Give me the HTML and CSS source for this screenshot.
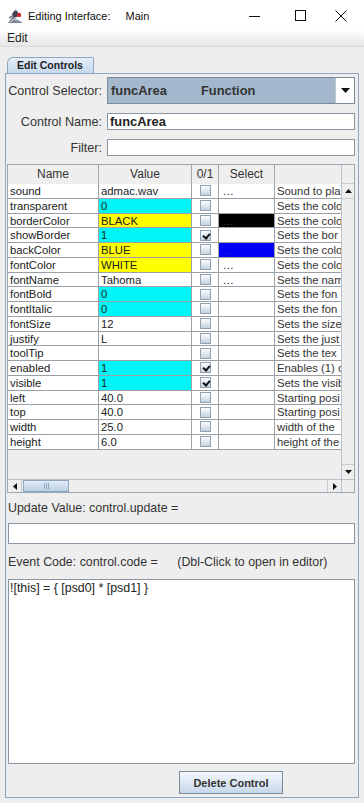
FILE: index.html
```html
<!DOCTYPE html>
<html lang="en">
<head>
    <meta charset="UTF-8">
    <title>Editing Interface: Main</title>
    <link rel="stylesheet" href="styles.css">
</head>
<body>
<div class="window">
    <div class="titlebar">
        <svg class="app-icon" width="16" height="15" viewBox="0 0 16 15">
            <path d="M0 14 L4 8 L9 10 L15 14 Z" fill="#7d8799"/>
            <path d="M2 13 L6 10 L10 11 L14 13" stroke="#d6dae2" stroke-width="1" fill="none"/>
            <path d="M4 5 L7 1 L10 3 L9 8 L5 9 Z" fill="#3e4452"/>
            <path d="M6 2 L8 0 L9 2 Z" fill="#9aa2b0"/>
            <circle cx="11" cy="6" r="2.2" fill="#c8262b"/>
            <path d="M1 9 L4 7" stroke="#5a6272" stroke-width="1.2"/>
        </svg>
        <span class="title">Editing Interface:</span>
        <span class="title title-doc">Main</span>
        <div class="win-buttons">
            <div class="win-btn btn-min">
                <svg width="12" height="12" viewBox="0 0 12 12"><path d="M0 6.5 H11" stroke="#111" stroke-width="1"/></svg>
            </div>
            <div class="win-btn btn-max">
                <svg width="12" height="12" viewBox="0 0 12 12"><rect x="0.5" y="0.5" width="10" height="10" fill="none" stroke="#111" stroke-width="1"/></svg>
            </div>
            <div class="win-btn btn-close">
                <svg width="12" height="12" viewBox="0 0 12 12"><path d="M0.5 0.5 L11.5 11.5 M11.5 0.5 L0.5 11.5" stroke="#111" stroke-width="1"/></svg>
            </div>
        </div>
    </div>
    <div class="menubar"><span>Edit</span></div>

    <div class="content">
        <div class="tab">Edit Controls</div>
        <div class="panel">
            <div class="form-row selector-row">
                <label>Control Selector:</label>
                <div class="combo">
                    <span class="combo-name">funcArea</span>
                    <span class="combo-type">Function</span>
                    <div class="combo-arrow">
                        <svg width="9" height="5" viewBox="0 0 9 5"><path d="M0 0 H9 L4.5 5 Z" fill="#111"/></svg>
                    </div>
                </div>
            </div>
            <div class="form-row">
                <label>Control Name:</label>
                <div class="field bold">funcArea</div>
            </div>
            <div class="form-row">
                <label>Filter:</label>
                <div class="field"></div>
            </div>

            <div class="table-pane">
                <div class="thead">
                    <div class="th">Name</div>
                    <div class="th">Value</div>
                    <div class="th">0/1</div>
                    <div class="th">Select</div>
                    <div class="th"></div>
                </div>
                <div class="vcorner"></div>
                <div class="viewport">
                    <div class="tr"><div class="td">sound</div><div class="td">admac.wav</div><div class="td cbcell"><span class="cb"></span></div><div class="td sel">...</div><div class="td desc">Sound to pla</div></div>
                    <div class="tr"><div class="td">transparent</div><div class="td cyan">0</div><div class="td cbcell"><span class="cb"></span></div><div class="td sel"></div><div class="td desc">Sets the colo</div></div>
                    <div class="tr"><div class="td">borderColor</div><div class="td yellow">BLACK</div><div class="td cbcell"><span class="cb"></span></div><div class="td sel sel-black">...</div><div class="td desc">Sets the colo</div></div>
                    <div class="tr"><div class="td">showBorder</div><div class="td cyan">1</div><div class="td cbcell"><span class="cb checked"></span></div><div class="td sel"></div><div class="td desc">Sets the bor</div></div>
                    <div class="tr"><div class="td">backColor</div><div class="td yellow">BLUE</div><div class="td cbcell"><span class="cb"></span></div><div class="td sel sel-blue">...</div><div class="td desc">Sets the colo</div></div>
                    <div class="tr"><div class="td">fontColor</div><div class="td yellow">WHITE</div><div class="td cbcell"><span class="cb"></span></div><div class="td sel">...</div><div class="td desc">Sets the colo</div></div>
                    <div class="tr"><div class="td">fontName</div><div class="td">Tahoma</div><div class="td cbcell"><span class="cb"></span></div><div class="td sel">...</div><div class="td desc">Sets the nam</div></div>
                    <div class="tr"><div class="td">fontBold</div><div class="td cyan">0</div><div class="td cbcell"><span class="cb"></span></div><div class="td sel"></div><div class="td desc">Sets the fon</div></div>
                    <div class="tr"><div class="td">fontItalic</div><div class="td cyan">0</div><div class="td cbcell"><span class="cb"></span></div><div class="td sel"></div><div class="td desc">Sets the fon</div></div>
                    <div class="tr"><div class="td">fontSize</div><div class="td">12</div><div class="td cbcell"><span class="cb"></span></div><div class="td sel"></div><div class="td desc">Sets the size</div></div>
                    <div class="tr"><div class="td">justify</div><div class="td">L</div><div class="td cbcell"><span class="cb"></span></div><div class="td sel"></div><div class="td desc">Sets the just</div></div>
                    <div class="tr"><div class="td">toolTip</div><div class="td"></div><div class="td cbcell"><span class="cb"></span></div><div class="td sel"></div><div class="td desc">Sets the tex</div></div>
                    <div class="tr"><div class="td">enabled</div><div class="td cyan">1</div><div class="td cbcell"><span class="cb checked"></span></div><div class="td sel"></div><div class="td desc">Enables (1) o</div></div>
                    <div class="tr"><div class="td">visible</div><div class="td cyan">1</div><div class="td cbcell"><span class="cb checked"></span></div><div class="td sel"></div><div class="td desc">Sets the visib</div></div>
                    <div class="tr"><div class="td">left</div><div class="td">40.0</div><div class="td cbcell"><span class="cb"></span></div><div class="td sel"></div><div class="td desc">Starting posi</div></div>
                    <div class="tr"><div class="td">top</div><div class="td">40.0</div><div class="td cbcell"><span class="cb"></span></div><div class="td sel"></div><div class="td desc">Starting posi</div></div>
                    <div class="tr"><div class="td">width</div><div class="td">25.0</div><div class="td cbcell"><span class="cb"></span></div><div class="td sel"></div><div class="td desc">width of the</div></div>
                    <div class="tr"><div class="td">height</div><div class="td">6.0</div><div class="td cbcell"><span class="cb"></span></div><div class="td sel"></div><div class="td desc">height of the</div></div>
                </div>
                <div class="vscroll">
                    <div class="sbtn">
                        <svg width="7" height="4" viewBox="0 0 7 4"><path d="M0 4 H7 L3.5 0 Z" fill="#111"/></svg>
                    </div>
                    <div class="sbtn">
                        <svg width="7" height="4" viewBox="0 0 7 4"><path d="M0 0 H7 L3.5 4 Z" fill="#111"/></svg>
                    </div>
                </div>
                <div class="hscroll">
                    <div class="sbtn hbtn">
                        <svg width="4" height="7" viewBox="0 0 4 7"><path d="M4 0 V7 L0 3.5 Z" fill="#111"/></svg>
                    </div>
                    <div class="thumb"><span class="grip"></span></div>
                    <div class="sbtn hbtn right">
                        <svg width="4" height="7" viewBox="0 0 4 7"><path d="M0 0 V7 L4 3.5 Z" fill="#111"/></svg>
                    </div>
                </div>
                <div class="hcorner"></div>
            </div>

            <div class="caption update-caption">Update Value: control.update =</div>
            <div class="field wide-field"></div>
            <div class="caption event-caption">Event Code: control.code = <span class="hint">(Dbl-Click to open in editor)</span></div>
            <div class="code-area">![this] = { [psd0] * [psd1] }</div>
            <div class="button-row">
                <button class="delete-btn">Delete Control</button>
            </div>
        </div>
    </div>
</div>
</body>
</html>
```

FILE: styles.css
```css
* {
    box-sizing: border-box;
}
body {
    margin: 0;
    background: #eeeeee;
    font-family: "Liberation Sans", Arial, sans-serif;
    color: #333;
}
.window {
    width: 364px;
    height: 803px;
    overflow: hidden;
    background: #eeeeee;
}
.titlebar {
    height: 31px;
    background: #fff;
    display: flex;
    align-items: center;
    padding-left: 8px;
}
.app-icon {
    margin-right: 4px;
    margin-top: 1px;
}
.title {
    font-size: 11px;
    color: #111;
}
.title-doc {
    margin-left: 15px;
}
.win-buttons {
    margin-left: auto;
    display: flex;
    height: 31px;
}
.win-btn {
    display: flex;
    align-items: center;
    justify-content: center;
}
.btn-min { width: 58px; }
.btn-max { width: 34px; }
.btn-close { width: 46px; }

.menubar {
    height: 16px;
    background: linear-gradient(#fdfdfd, #e6e6e6);
    border-bottom: 1px solid #dadada;
    font-size: 12px;
    line-height: 15px;
    padding-left: 7px;
    color: #222;
}

.content {
    padding: 10px 5px 0 5px;
}
.tab {
    width: 87px;
    height: 16px;
    margin-left: 2px;
    border: 1px solid #8ea6bf;
    border-bottom: none;
    border-top-left-radius: 6px;
    border-top-right-radius: 2px;
    background: linear-gradient(#e4eef8, #c6d9ec);
    font-size: 10.5px;
    font-weight: bold;
    line-height: 15px;
    padding-left: 9px;
    color: #222;
}
.panel {
    width: 354px;
    height: 725px;
    border: 1px solid #8ea6bf;
    padding: 3px 3px 0 2px;
    background: #eeeeee;
}

.form-row {
    display: grid;
    grid-template-columns: 94px 1fr;
    column-gap: 5px;
    align-items: center;
    height: 17px;
    margin-top: 9px;
}
.form-row label {
    text-align: right;
    font-size: 12.6px;
    color: #333;
}
.selector-row {
    height: 27px;
    margin-top: 0;
}
.form-row:last-of-type {
    margin-top: 10px;
}
.combo {
    height: 27px;
    display: flex;
    align-items: center;
    background: #a3b8cc;
    border: 1px solid #7a8a99;
    font-size: 12.9px;
    font-weight: bold;
    color: #333;
}
.combo-name {
    padding-left: 3px;
    width: 93px;
}
.combo-arrow {
    margin-left: auto;
    width: 19px;
    height: 25px;
    background: #fff;
    border-left: 1px solid #c0c8d0;
    display: flex;
    align-items: center;
    justify-content: center;
}
.field {
    height: 17px;
    background: #fff;
    border: 1px solid #8a96a3;
    font-size: 12.9px;
    line-height: 15px;
    padding-left: 2px;
    color: #222;
}
.bold {
    font-weight: bold;
}

.table-pane {
    margin-top: 8px;
    margin-left: -1px;
    width: 348px;
    height: 329px;
    border: 1px solid #9aa8b6;
    display: grid;
    grid-template-columns: 333px 13px;
    grid-template-rows: 19px 1fr 13px;
    background: #eeeeee;
}
.thead,
.tr {
    display: grid;
    grid-template-columns: 91px 93px 27px 56px 66px;
}
.thead {
    overflow: hidden;
    background: #eeeeee;
}
.th {
    border-right: 1px solid #a6a6a6;
    border-bottom: 1px solid #a6a6a6;
    font-size: 12px;
    line-height: 19px;
    text-align: center;
    color: #333;
}
.th:last-child {
    border-right: none;
}
.vcorner {
    border-left: 1px solid #b9c2cb;
    border-bottom: 1px solid #c8cdd2;
}
.viewport {
    overflow: hidden;
}
.tr {
    height: 14.75px;
}
.td {
    background: #fff;
    border-right: 1px solid #9aa0a6;
    border-bottom: 1px solid #9aa0a6;
    font-size: 11.3px;
    line-height: 14px;
    padding-left: 2px;
    white-space: nowrap;
    overflow: hidden;
    color: #222;
}
.td.desc {
    border-right: none;
    color: #333;
}
.cyan {
    background: #00f6f6;
}
.yellow {
    background: #ffff00;
}
.cbcell {
    display: flex;
    align-items: center;
    justify-content: center;
    padding-left: 0;
}
.cb {
    width: 11px;
    height: 11px;
    border: 1px solid #93a0ad;
    background: linear-gradient(#fbfdff, #c5d2df);
    position: relative;
}
.cb.checked::after {
    content: "";
    position: absolute;
    left: 2px;
    top: 2px;
    width: 5px;
    height: 3px;
    border-left: 2px solid #111;
    border-bottom: 2px solid #111;
    transform: rotate(-50deg);
}
.sel {
    padding-left: 4px;
    letter-spacing: 0.5px;
}
.sel-black {
    background: #000;
    color: #444;
}
.sel-blue {
    background: #0000f4;
    color: #2a2ac0;
}

.vscroll {
    border-left: 1px solid #b9c2cb;
    display: flex;
    flex-direction: column;
    justify-content: space-between;
    background: #eeeeee;
}
.sbtn {
    height: 15px;
    display: flex;
    align-items: center;
    justify-content: center;
    border-bottom: 1px solid #c8cdd2;
}
.vscroll .sbtn:last-child {
    border-bottom: none;
    border-top: 1px solid #c8cdd2;
}
.hscroll {
    border-top: 1px solid #b9c2cb;
    display: flex;
    align-items: stretch;
    background: #eeeeee;
}
.hbtn {
    width: 14px;
    height: auto;
    border-bottom: none;
    border-right: 1px solid #c8cdd2;
}
.hbtn.right {
    margin-left: auto;
    border-right: none;
    border-left: 1px solid #c8cdd2;
}
.thumb {
    width: 46px;
    margin-left: 1px;
    border: 1px solid #8ea6bf;
    background: linear-gradient(#e2ecf6, #bcd0e4);
    display: flex;
    align-items: center;
    justify-content: center;
}
.grip {
    width: 5px;
    height: 6px;
    border-left: 1px solid #8ea6bf;
    border-right: 1px solid #8ea6bf;
    position: relative;
}
.grip::after {
    content: "";
    position: absolute;
    left: 1px;
    top: 0;
    height: 6px;
    border-left: 1px solid #8ea6bf;
}
.hcorner {
    border-top: 1px solid #b9c2cb;
    border-left: 1px solid #b9c2cb;
}

.caption {
    font-size: 12.4px;
    line-height: 16px;
    color: #333;
}
.update-caption {
    margin-top: 7px;
}
.wide-field {
    margin-top: 7px;
    height: 21px;
}
.event-caption {
    margin-top: 10px;
}
.hint {
    margin-left: 16px;
}
.code-area {
    margin-top: 9px;
    height: 185px;
    background: #fff;
    border: 1px solid #8a96a3;
    font-size: 12.4px;
    line-height: 16px;
    padding: 0 1px;
    color: #222;
}
.button-row {
    margin-top: 7px;
    padding-left: 171px;
}
.delete-btn {
    width: 104px;
    height: 23px;
    border: 1px solid #7a8a99;
    background: linear-gradient(#f4f8fc, #c6d8ea);
    font-family: "Liberation Sans", Arial, sans-serif;
    font-size: 11px;
    font-weight: bold;
    color: #333;
    padding: 0;
}
```
